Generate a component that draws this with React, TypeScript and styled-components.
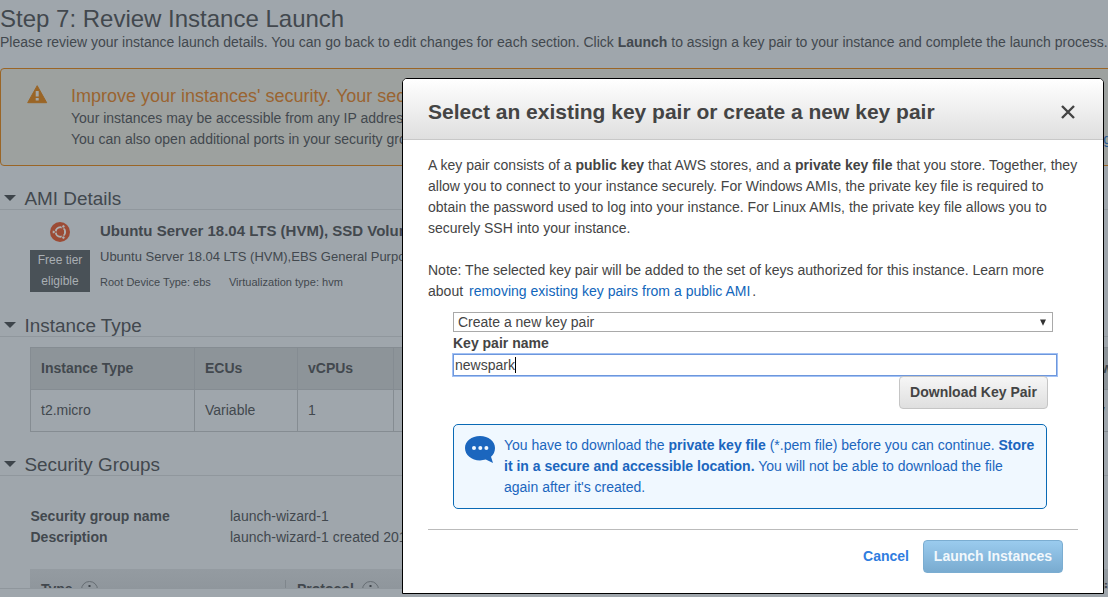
import React from "react";
import styled, { createGlobalStyle } from "styled-components";

const GlobalStyle = createGlobalStyle`
  * { box-sizing: border-box; }
  body {
    margin: 0;
    overflow: hidden;
    background: #9fa6ac;
    color: #42484e;
    font: 14px/21px "Liberation Sans", Arial, sans-serif;
  }
`;

const Screen = styled.div`
  position: relative;
  width: 1108px;
  height: 597px;
  overflow: hidden;
`;

const Page = styled.main`
  height: 589px;
  overflow: hidden;
  border-bottom: 1px solid #8f969c;
`;

const Line = styled.div<{ $track?: number }>`
  white-space: nowrap;
  letter-spacing: ${(p) => p.$track ?? 0}px;
`;

const PageTitle = styled.h1`
  margin: 0;
  padding-top: 5px;
  font-size: 24px;
  font-weight: 400;
  line-height: 27px;
  white-space: nowrap;
`;

const Warning = styled.section`
  display: flex;
  width: 1130px;
  height: 98px;
  margin-top: 15px;
  padding: 16px 0 0 26px;
  gap: 23px;
  border: 1px solid #9a6526;
  border-radius: 4px;
  background: #9da19f;
`;

const WarningText = styled.div`
  width: 960px;
  margin-top: 1px;
`;

const WarningTitle = styled(Line)`
  margin-bottom: 1px;
  color: #9a6431;
  font-size: 18px;
`;

const WarningRow = styled.div`
  display: flex;
  justify-content: space-between;
  width: 1075px;
`;

const PageLink = styled.span`
  color: #2a5b94;
`;

const SectionHead = styled.h2<{ $top: number }>`
  display: flex;
  align-items: center;
  gap: 8.5px;
  height: 25px;
  margin: ${(p) => p.$top}px 0 0;
  padding: 4px 0 0 4px;
  border-bottom: 1px solid #90979d;
  font-size: 18.9px;
  font-weight: 400;
  line-height: 24px;
`;

const Arrow = styled.span`
  width: 0;
  height: 0;
  margin-bottom: 2px;
  border: 6px solid transparent;
  border-top-color: #3d444a;
  border-bottom: 0;
`;

const Ami = styled.section`
  display: flex;
  gap: 10px;
  height: 92px;
  padding: 12px 0 0 30px;
`;

const AmiBadge = styled.div`
  display: flex;
  flex-direction: column;
  align-items: center;
  gap: 8px;
  width: 60px;
`;

const AmiText = styled.div`
  margin-top: -2px;
`;

const FreeTier = styled.div`
  width: 60px;
  height: 42px;
  background: #495157;
  color: #a9afb4;
  font-size: 12px;
  text-align: center;
`;

const AmiName = styled(Line)`
  font-size: 15px;
  font-weight: 700;
`;

const AmiDescription = styled(Line)`
  margin-top: 5px;
  font-size: 13px;
`;

const AmiMeta = styled(Line)`
  display: flex;
  gap: 18px;
  margin-top: 5px;
  font-size: 11px;
`;

const InstanceTable = styled.div`
  width: 1200px;
  margin: 10px 0 0 30px;
  border: 1px solid #858c92;
`;

const InstanceRow = styled.div<{ $head?: boolean }>`
  display: grid;
  grid-template-columns: 164px 103px 96px 150px 200px 325px 1fr;
  height: ${(p) => (p.$head ? 42 : 41)}px;
  background: ${(p) => (p.$head ? "#8d9499" : "transparent")};
  border-bottom: ${(p) => (p.$head ? "1px solid #858c92" : "0")};
  font-weight: ${(p) => (p.$head ? 700 : 400)};
`;

const Cell = styled.div`
  padding: 10px;
  border-right: 1px solid #858c92;
  white-space: nowrap;
`;

const Groups = styled.dl`
  display: grid;
  grid-template-columns: 199.5px 1fr;
  margin: 30px 0 0 30.5px;
  white-space: nowrap;
`;

const Term = styled.dt`
  font-weight: 700;
`;

const Value = styled.dd`
  margin: 0;
`;

const RuleHead = styled.div`
  display: grid;
  grid-template-columns: repeat(5, 256px);
  height: 42px;
  margin: 21px 0 0 30px;
  padding: 11px 0 0;
  background: linear-gradient(#949ba1, #8a9197);
  font-weight: 700;
`;

const RuleCell = styled.div`
  display: flex;
  gap: 8px;
  padding-left: 11px;
  border-right: 1px solid #7f868c;
  line-height: 19px;
`;

const Dialog = styled.div`
  position: absolute;
  left: 402px;
  top: 78px;
  width: 702px;
  height: 516px;
  border: 1px solid #000;
  border-radius: 5px 5px 0 0;
  background: #fff;
  color: #444;
`;

const DialogHead = styled.header`
  display: flex;
  align-items: center;
  justify-content: space-between;
  height: 61px;
  padding: 6px 28px 0 25px;
  border-bottom: 1px solid #c8c8c8;
  border-radius: 4px 4px 0 0;
  background: linear-gradient(#fff, #dfdfdf);
`;

const DialogTitle = styled.h2`
  margin: 0 0 2px;
  font-size: 21px;
  white-space: nowrap;
`;

const DialogBody = styled.div`
  padding: 15px 25px 0;
`;

const Paragraph = styled.div`
  margin-bottom: 21px;
`;

const Link = styled.a`
  margin: 0 2px;
  color: #1166bb;
`;

const Form = styled.div`
  display: flex;
  flex-direction: column;
  margin-top: -11px;
  padding-left: 25px;
`;

const Select = styled.div`
  display: flex;
  align-items: center;
  justify-content: space-between;
  width: 600px;
  height: 20px;
  padding: 0 6px 0 4px;
  border: 1px solid #a9a9a9;
`;

const FieldLabel = styled(Line)`
  margin-top: 1px;
  font-weight: 700;
`;

const Field = styled.div`
  display: flex;
  align-items: center;
  width: 604px;
  height: 22px;
  padding-left: 1px;
  border: 1px solid #6d97dc;
  box-shadow: 0 0 0 1px #a3c2f5;
`;

const Caret = styled.span`
  width: 1px;
  height: 16px;
  background: #000;
`;

const Button = styled.button<{ $primary?: boolean }>`
  width: ${(p) => (p.$primary ? 140 : 149)}px;
  height: 33px;
  padding: 0;
  border: 1px solid ${(p) => (p.$primary ? "#7badd1" : "#c5c5c5")};
  border-radius: 4px;
  background: ${(p) =>
    p.$primary ? "linear-gradient(#9acbee, #79abd0)" : "linear-gradient(#f6f6f6, #dfdfdf)"};
  color: ${(p) => (p.$primary ? "#f2f8fc" : "#444")};
  font: 700 14px/21px "Liberation Sans", Arial, sans-serif;
  white-space: nowrap;
`;

const DownloadRow = styled.div`
  display: flex;
  justify-content: flex-end;
  width: 595px;
`;

const Notice = styled.div`
  display: flex;
  gap: 9px;
  width: 594px;
  height: 85px;
  margin-top: 15px;
  padding: 10px 11px;
  border: 1px solid #0a6ab5;
  border-radius: 5px;
  background: #f0f8ff;
  color: #1b66be;
`;

const DialogFoot = styled.footer`
  display: flex;
  align-items: center;
  justify-content: flex-end;
  gap: 14px;
  margin-top: 20px;
  padding: 10px 15px 0 0;
  border-top: 1px solid #bbb;
`;

const Cancel = styled.span`
  color: #2f7de0;
  font-weight: 700;
`;

const WarningIcon = () => (
  <svg width="21" height="19" viewBox="0 0 21 19">
    <path d="M10.2 0.7 L19.7 17.7 H0.7 Z" fill="#9a6526" stroke="#9a6526" strokeLinejoin="round" />
    <path d="M8.7 6 H11.7 V11.5 H8.7 Z M8.7 13 H11.7 V15.6 H8.7 Z" fill="#a3a7a6" />
  </svg>
);

const UbuntuIcon = () => (
  <svg width="20" height="20" viewBox="0 0 20 20">
    <circle cx="10" cy="10" r="10" fill="#9c4b35" />
    <circle cx="10.4" cy="10" r="4.7" fill="none" stroke="#adb0b1" strokeWidth="2" />
    <g stroke="#9c4b35" strokeWidth="0.9">
      <path d="M10.4 10 L3 10 M10.4 10 L14 3.8 M10.4 10 L14 16.2" />
      <circle cx="3.7" cy="10" r="1.7" fill="#adb0b1" />
      <circle cx="13.4" cy="4.4" r="1.7" fill="#adb0b1" />
      <circle cx="13.4" cy="15.6" r="1.7" fill="#adb0b1" />
    </g>
    <circle cx="10.4" cy="10" r="3.6" fill="#9c4b35" />
  </svg>
);

const InfoIcon = () => (
  <svg width="17" height="19" viewBox="0 0 17 19" fill="none" stroke="#666d73">
    <circle cx="8.5" cy="9.5" r="8" />
    <path d="M8.5 5 V7 M8.5 9 V14" stroke="#42484e" strokeWidth="2" />
  </svg>
);

const CloseIcon = () => (
  <svg width="14" height="14" viewBox="0 0 14 14" stroke="#444" strokeWidth="2.4">
    <path d="M1 1 L13 13 M13 1 L1 13" />
  </svg>
);

const SpeechIcon = () => (
  <svg width="30" height="28" viewBox="0 0 30 28">
    <path
      d="M15 1 C23.5 1 30 6.2 30 13 C30 16.7 28.6 19.5 26 21.7 L28 28 L20.8 24.6 C19 25.1 17 25.4 15 25.4 C6.5 25.4 0 20 0 13 C0 6.2 6.5 1 15 1 Z"
      fill="#1b66be"
    />
    <g fill="#f0f8ff">
      <circle cx="9" cy="13" r="2" />
      <circle cx="15.3" cy="13" r="2" />
      <circle cx="21.4" cy="13" r="2" />
    </g>
  </svg>
);

const DropIcon = () => (
  <svg width="6" height="7" viewBox="0 0 6 7">
    <path d="M0 0.5 H6 L3 6.8 Z" fill="#333" />
  </svg>
);

const instanceHead = ["Instance Type", "ECUs", "vCPUs", "Memory (GiB)", "Instance Storage (GB)", "EBS-Optimized Available", "Network Performance"];
const instanceData = ["t2.micro", "Variable", "1", "1", "EBS only", "-", "Low to Moderate"];
const ruleHead = ["Type", "Protocol", "Port Range", "Source", "Description"];

export default function App() {
  return (
    <Screen>
      <GlobalStyle />
      <Page>
        <PageTitle>Step 7: Review Instance Launch</PageTitle>
        <Line $track={-0.003}>
          Please review your instance launch details. You can go back to edit changes for each section. Click <b>Launch</b> to
          assign a key pair to your instance and complete the launch process.
        </Line>
        <Warning>
          <WarningIcon />
          <WarningText>
            <WarningTitle>Improve your instances' security. Your security group is open to the world.</WarningTitle>
            <Line>Your instances may be accessible from any IP address.</Line>
            <WarningRow>
              <Line>You can also open additional ports in your security group</Line>
              <PageLink>groups</PageLink>
            </WarningRow>
          </WarningText>
        </Warning>

        <SectionHead $top={19}><Arrow />AMI Details</SectionHead>
        <Ami>
          <AmiBadge>
            <UbuntuIcon />
            <FreeTier>Free tier<br />eligible</FreeTier>
          </AmiBadge>
          <AmiText>
            <AmiName>Ubuntu Server 18.04 LTS (HVM), SSD Volume Type</AmiName>
            <AmiDescription>Ubuntu Server 18.04 LTS (HVM),EBS General Purpose (SSD) Volume Type.</AmiDescription>
            <AmiMeta $track={0.02}>
              <span>Root Device Type: ebs</span>
              <span>Virtualization type: hvm</span>
            </AmiMeta>
          </AmiText>
        </Ami>

        <SectionHead $top={10}><Arrow />Instance Type</SectionHead>
        <InstanceTable>
          <InstanceRow $head>{instanceHead.map((t) => <Cell key={t}>{t}</Cell>)}</InstanceRow>
          <InstanceRow>{instanceData.map((t, i) => <Cell key={i}>{t}</Cell>)}</InstanceRow>
        </InstanceTable>

        <SectionHead $top={19}><Arrow />Security Groups</SectionHead>
        <Groups>
          <Term>Security group name</Term><Value>launch-wizard-1</Value>
          <Term>Description</Term><Value>launch-wizard-1 created 2019</Value>
        </Groups>
        <RuleHead>{ruleHead.map((t) => <RuleCell key={t}>{t}<InfoIcon /></RuleCell>)}</RuleHead>
      </Page>

      <Dialog role="dialog">
        <DialogHead>
          <DialogTitle>Select an existing key pair or create a new key pair</DialogTitle>
          <CloseIcon />
        </DialogHead>
        <DialogBody>
          <Paragraph>
            <Line $track={0.016}>A key pair consists of a <b>public key</b> that AWS stores, and a <b>private key file</b> that you store. Together, they</Line>
            <Line $track={0.01}>allow you to connect to your instance securely. For Windows AMIs, the private key file is required to</Line>
            <Line $track={0.01}>obtain the password used to log into your instance. For Linux AMIs, the private key file allows you to</Line>
            <Line>securely SSH into your instance.</Line>
          </Paragraph>
          <Paragraph>
            <Line>Note: The selected key pair will be added to the set of keys authorized for this instance. Learn more</Line>
            <Line $track={0.01}>about <Link>removing existing key pairs from a public AMI</Link>.</Line>
          </Paragraph>
          <Form>
            <Select>Create a new key pair<DropIcon /></Select>
            <FieldLabel>Key pair name</FieldLabel>
            <Field>newspark<Caret /></Field>
            <DownloadRow><Button>Download Key Pair</Button></DownloadRow>
            <Notice>
              <SpeechIcon />
              <div>
                <Line>You have to download the <b>private key file</b> (*.pem file) before you can continue. <b>Store</b></Line>
                <Line><b>it in a secure and accessible location.</b> You will not be able to download the file</Line>
                <Line>again after it's created.</Line>
              </div>
            </Notice>
          </Form>
          <DialogFoot>
            <Cancel>Cancel</Cancel>
            <Button $primary>Launch Instances</Button>
          </DialogFoot>
        </DialogBody>
      </Dialog>
    </Screen>
  );
}
